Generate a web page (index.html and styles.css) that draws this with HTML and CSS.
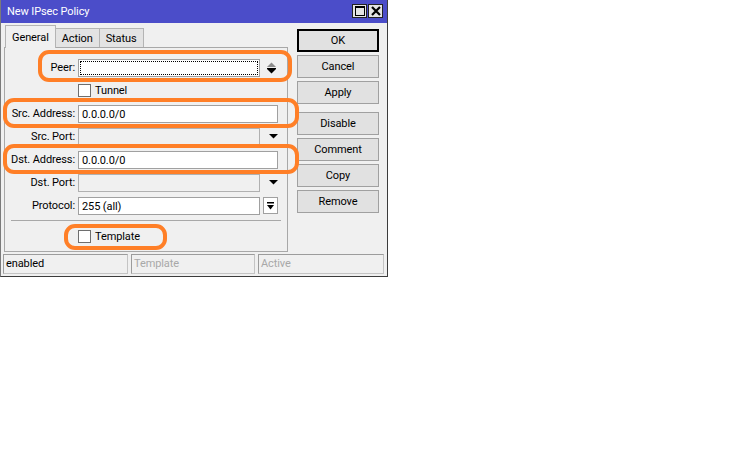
FILE: index.html
```html
<!DOCTYPE html>
<html lang="en">
<head>
    <meta charset="UTF-8">
    <meta name="viewport" content="width=device-width, initial-scale=1.0">
    <title>New IPsec Policy</title>
    <link rel="stylesheet" href="styles.css">
</head>
<body>
    <div class="window">
        <div class="titlebar">
            <span class="title">New IPsec Policy</span>
            <div class="title-btns">
                <span class="tbtn">
                    <svg width="10" height="10" viewBox="0 0 10 10"><rect x="0.5" y="0.5" width="9" height="9" fill="none" stroke="#000"/><rect x="0" y="0" width="10" height="2" fill="#000"/></svg>
                </span>
                <span class="tbtn">
                    <svg width="10" height="10" viewBox="0 0 10 10"><path d="M1 1 L9 9 M9 1 L1 9" stroke="#000" stroke-width="2.2"/></svg>
                </span>
            </div>
        </div>

        <div class="body">
            <div class="main">
                <div class="tabs">
                    <span class="tab active">General</span>
                    <span class="tab">Action</span>
                    <span class="tab">Status</span>
                </div>
                <div class="panel">
                    <div class="row">
                        <label>Peer:</label>
                        <span class="field short focus"></span>
                        <svg class="spin" width="9" height="12" viewBox="0 0 9 12">
                            <polygon points="0,5 4.5,0.5 9,5" fill="#8c8c8c"/>
                            <rect x="0" y="6" width="9" height="1" fill="#000"/>
                            <polygon points="0,7 9,7 4.5,11.5" fill="#000"/>
                        </svg>
                    </div>
                    <div class="row">
                        <label></label>
                        <span class="check"></span><span class="check-label">Tunnel</span>
                    </div>
                    <div class="row">
                        <label>Src. Address:</label>
                        <span class="field">0.0.0.0/0</span>
                    </div>
                    <div class="row">
                        <label>Src. Port:</label>
                        <span class="field short disabled"></span>
                        <svg class="drop" width="9" height="5" viewBox="0 0 9 5"><polygon points="0,0 9,0 4.5,4.5" fill="#000"/></svg>
                    </div>
                    <div class="row">
                        <label>Dst. Address:</label>
                        <span class="field">0.0.0.0/0</span>
                    </div>
                    <div class="row">
                        <label>Dst. Port:</label>
                        <span class="field short disabled"></span>
                        <svg class="drop" width="9" height="5" viewBox="0 0 9 5"><polygon points="0,0 9,0 4.5,4.5" fill="#000"/></svg>
                    </div>
                    <div class="row">
                        <label>Protocol:</label>
                        <span class="field short">255 (all)</span>
                        <span class="drop-btn">
                            <svg width="7" height="8" viewBox="0 0 7 8"><rect x="0" y="0" width="7" height="1.5" fill="#000"/><polygon points="0,3 7,3 3.5,7.5" fill="#000"/></svg>
                        </span>
                    </div>
                    <div class="separator"></div>
                    <div class="row">
                        <label></label>
                        <span class="check"></span><span class="check-label">Template</span>
                    </div>
                </div>
            </div>

            <div class="buttons">
                <button class="default">OK</button>
                <button>Cancel</button>
                <button>Apply</button>
                <button class="spaced">Disable</button>
                <button>Comment</button>
                <button>Copy</button>
                <button>Remove</button>
            </div>
        </div>

        <div class="statusbar">
            <span class="cell">enabled</span>
            <span class="cell dim">Template</span>
            <span class="cell dim">Active</span>
        </div>

        <!-- hand-drawn highlight marks -->
        <div class="mark mark-peer"></div>
        <div class="mark mark-src"></div>
        <div class="mark mark-dst"></div>
        <div class="mark mark-template"></div>
    </div>
</body>
</html>
```

FILE: styles.css
```css
body {
    margin: 0;
    padding: 0;
    background-color: #fff;
    font-family: Roboto, "Liberation Sans", Arial, sans-serif;
    font-size: 11px;
    letter-spacing: -0.1px;
    color: #000;
}
.window {
    position: relative;
    box-sizing: border-box;
    width: 388px;
    height: 277px;
    background-color: #f0f0f0;
    border: 1px solid #3c3c3c;
    border-top: none;
    border-left-color: #7a7a7a;
}
.titlebar {
    height: 23px;
    background-color: #4b4dc9;
    display: flex;
    align-items: center;
    justify-content: space-between;
    padding: 0 4px 0 6px;
}
.title {
    color: #fff;
}
.title-btns {
    display: flex;
    gap: 1px;
    margin-top: -1px;
}
.tbtn {
    box-sizing: border-box;
    width: 15px;
    height: 14px;
    background-color: #e4e4e4;
    border: 1px solid #222;
    display: flex;
    align-items: center;
    justify-content: center;
}
.body {
    display: flex;
    height: 229px;
    padding-left: 3px;
}
.main {
    width: 284px;
    padding-top: 2px;
}
.tabs {
    display: flex;
    align-items: flex-end;
    height: 22px;
    padding-left: 1px;
}
.tab {
    box-sizing: border-box;
    height: 19px;
    padding: 3px 6px 0;
    background-color: #e3e3e3;
    border: 1px solid #b4b4b4;
    border-bottom: none;
    margin-left: -1px;
}
.tab.active {
    height: 23px;
    padding-top: 5px;
    background-color: #f0f0f0;
    margin-bottom: -1px;
    position: relative;
    z-index: 1;
    margin-left: 0;
}
.panel {
    box-sizing: border-box;
    height: 205px;
    border: 1px solid #a8a8a8;
    padding-top: 8px;
}
.row {
    display: flex;
    align-items: center;
    height: 23px;
}
.row label {
    width: 70px;
    text-align: right;
    margin-right: 3px;
    flex-shrink: 0;
}
.field {
    box-sizing: border-box;
    width: 200px;
    height: 18px;
    background-color: #fff;
    border: 1px solid #a0a0a0;
    padding: 1px 3px 0;
    line-height: 15px;
    font-size: 11px;
}
.field.short {
    width: 182px;
}
.field.focus {
    outline: 1px dotted #000;
    outline-offset: -3px;
}
.field.disabled {
    background-color: #f0f0f0;
    border-color: #b0b0b0;
}
.spin {
    margin-left: 7px;
}
.drop {
    margin-left: 9px;
}
.drop-btn {
    box-sizing: border-box;
    width: 15px;
    height: 17px;
    margin-left: 3px;
    border: 1px solid #a0a0a0;
    background-color: #fff;
    display: flex;
    align-items: center;
    justify-content: center;
}
.check {
    box-sizing: border-box;
    width: 13px;
    height: 13px;
    background-color: #fff;
    border: 1px solid #6e6e6e;
}
.check-label {
    margin-left: 4px;
}
.separator {
    height: 0;
    border-top: 1px solid #a8a8a8;
    margin: 3px 6px 4px 6px;
}
.buttons {
    display: flex;
    flex-direction: column;
    gap: 3px;
    margin-left: 9px;
    padding-top: 6px;
}
.buttons button {
    box-sizing: border-box;
    width: 82px;
    height: 23px;
    padding: 0;
    background-color: #e1e1e1;
    border: 1px solid #a0a0a0;
    font-family: Roboto, "Liberation Sans", Arial, sans-serif;
    font-size: 11px;
    letter-spacing: -0.1px;
    color: #000;
}
.buttons button.default {
    border: 2px solid #000;
}
.buttons button.spaced {
    margin-top: 5px;
}
.statusbar {
    display: grid;
    grid-template-columns: 125px 124px 1fr;
    gap: 3px;
    padding: 2px 3px 0 2px;
}
.cell {
    box-sizing: border-box;
    height: 20px;
    border: 1px solid #c4c4c4;
    border-top-color: #9c9c9c;
    border-left-color: #9c9c9c;
    padding: 2px 2px 0;
}
.cell.dim {
    color: #a8a8a8;
}
.mark {
    position: absolute;
    box-sizing: border-box;
    border: 4px solid #ff7f27;
    border-radius: 11px;
}
.mark-peer {
    left: 37px;
    top: 50px;
    width: 254px;
    height: 32px;
}
.mark-src {
    left: 2px;
    top: 98px;
    width: 296px;
    height: 30px;
}
.mark-dst {
    left: 2px;
    top: 144px;
    width: 296px;
    height: 30px;
}
.mark-template {
    left: 63px;
    top: 224px;
    width: 103px;
    height: 26px;
}
```
